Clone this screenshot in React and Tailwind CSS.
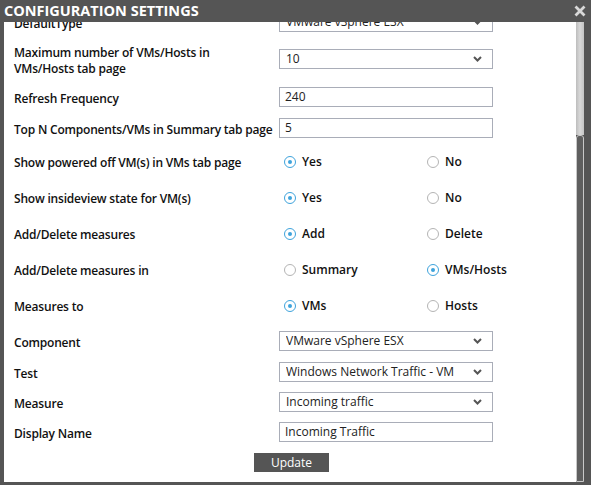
import React from 'react';

const FONT = { fontFamily: '"Open Sans", "Liberation Sans", sans-serif' };

function Chevron() {
  return (
    <svg width="9" height="6" viewBox="0 0 9 6" className="shrink-0">
      <path d="M1 1 L4.5 4.5 L8 1" fill="none" stroke="#555" strokeWidth="2" />
    </svg>
  );
}

function Select({ value }) {
  return (
    <div className="w-[214px] h-[20px] border border-[#a9adb8] bg-white flex items-center justify-between pl-[6px] pr-[10px] text-[12px] text-[#222]">
      <span className="truncate">{value}</span>
      <Chevron />
    </div>
  );
}

function Input({ value }) {
  return (
    <div className="w-[214px] h-[20px] border border-[#a9adb8] bg-white flex items-center pl-[5px] text-[12px] text-[#222]">
      {value}
    </div>
  );
}

function Radio({ checked, label }) {
  return (
    <div className="flex items-center gap-[6px]">
      <span
        className={`w-[12px] h-[12px] rounded-full border flex items-center justify-center ${checked ? 'border-[#3ea3dc]' : 'border-[#b4b4b4]'}`}
      >
        {checked && <span className="w-[4px] h-[4px] rounded-full bg-[#3ea3dc]" />}
      </span>
      <span className="text-[12px] font-semibold text-[#111]">{label}</span>
    </div>
  );
}

function Row({ label, children, className = '', pad = 'pt-[3px]' }) {
  return (
    <div className={`flex items-center ${className}`}>
      <div className={`w-[265px] shrink-0 whitespace-nowrap ${pad} text-[12px] font-semibold tracking-[-0.2px] text-[#111] leading-[16px]`}>{label}</div>
      {children}
    </div>
  );
}

function Radios({ a, b, first }) {
  return (
    <div className="flex items-center pl-[5px]">
      <div className="w-[143px]">
        <Radio checked={first} label={a} />
      </div>
      <Radio checked={!first} label={b} />
    </div>
  );
}

export default function App() {
  return (
    <div className="w-[591px] h-[485px] bg-[#555555] flex flex-col overflow-hidden" style={FONT}>
      {/* Title bar */}
      <div className="h-[22px] flex items-center justify-between pl-[4px] pr-[5px] shrink-0">
        <span className="text-white font-bold text-[14.5px]">CONFIGURATION SETTINGS</span>
        <svg width="12" height="12" viewBox="0 0 12 12">
          <path d="M1.5 1.5 L10.5 10.5 M10.5 1.5 L1.5 10.5" stroke="#d8d8d8" strokeWidth="2.8" />
        </svg>
      </div>

      <div className="flex flex-1 min-h-0 mb-[3px]">
        {/* Content */}
        <div className="ml-[4px] flex-1 bg-white overflow-hidden">
          <div className="mt-[-10px] pl-[10px]">
            <Row label="DefaultType" className="h-[20px]">
              <Select value="VMware vSphere ESX" />
            </Row>
            <Row label={<>Maximum number of VMs/Hosts in<br />VMs/Hosts tab page</>} className="h-[32px] mt-[11px]">
              <Select value="10" />
            </Row>
            <Row label="Refresh Frequency" className="h-[20px] mt-[12px]">
              <Input value="240" />
            </Row>
            <Row label="Top N Components/VMs in Summary tab page" className="h-[20px] mt-[11px]">
              <Input value="5" />
            </Row>
            <Row label="Show powered off VM(s) in VMs tab page" pad="pt-[1px]" className="h-[20px] mt-[14px]">
              <Radios a="Yes" b="No" first />
            </Row>
            <Row label="Show insideview state for VM(s)" pad="pt-[1px]" className="h-[20px] mt-[16px]">
              <Radios a="Yes" b="No" first />
            </Row>
            <Row label="Add/Delete measures" pad="pt-[1px]" className="h-[20px] mt-[16px]">
              <Radios a="Add" b="Delete" first />
            </Row>
            <Row label="Add/Delete measures in" pad="pt-[1px]" className="h-[20px] mt-[16px]">
              <Radios a="Summary" b="VMs/Hosts" first={false} />
            </Row>
            <Row label="Measures to" pad="pt-[1px]" className="h-[20px] mt-[16px]">
              <Radios a="VMs" b="Hosts" first />
            </Row>
            <Row label="Component" className="h-[20px] mt-[15px]">
              <Select value="VMware vSphere ESX" />
            </Row>
            <Row label="Test" className="h-[20px] mt-[11px]">
              <Select value="Windows Network Traffic - VM" />
            </Row>
            <Row label="Measure" className="h-[20px] mt-[10px]">
              <Select value="Incoming traffic" />
            </Row>
            <Row label="Display Name" className="h-[20px] mt-[10px]">
              <Input value="Incoming Traffic" />
            </Row>
            <div className="flex mt-[11px] pl-[240px]">
              <button type="button" className="w-[75px] h-[19px] bg-[#555555] text-white text-[12px] flex items-center justify-center">
                Update
              </button>
            </div>
          </div>
        </div>

        {/* Scrollbar */}
        <div className="w-[8px] flex flex-col">
          <div className="h-[113px] bg-gradient-to-r from-[#bdbdbd] via-[#d9d9d9] to-[#c4c4c4]" />
          <div className="flex-1 bg-[#5f5f5f] border border-[#c8c8c8] rounded-t-[3px]" />
        </div>
        <div className="w-[7px]" />
      </div>
    </div>
  );
}
